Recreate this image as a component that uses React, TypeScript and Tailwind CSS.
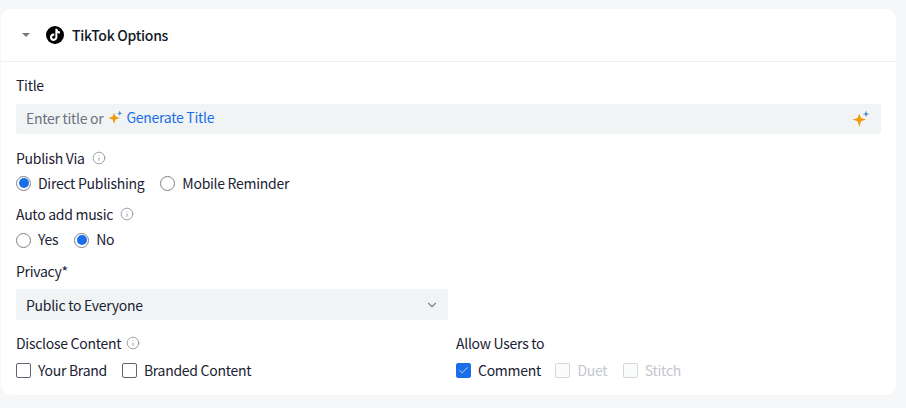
import React from 'react';
import { ChevronDown, Info, Check } from 'lucide-react';

const Sparkle = ({ size = 16 }: { size?: number }) => (
  <svg width={size} height={size} viewBox="0 0 16 16" className="shrink-0">
    <path d="M6.5 3 L8 7 L12.5 8.5 L8 10 L6.5 15 L5 10 L.5 8.5 L5 7 Z" fill="#f09a0a" />
    <path d="M12.5 .5 L13.2 2.8 L15.5 3.5 L13.2 4.2 L12.5 6.5 L11.8 4.2 L9.5 3.5 L11.8 2.8 Z" fill="#4a86c8" />
  </svg>
);

const TikTokLogo = () => (
  <svg width="18" height="18" viewBox="0 0 18 18">
    <circle cx="9" cy="9" r="9" fill="#000" />
    <path
      transform="translate(9 9) scale(1.2) translate(-9.3 -9)"
      d="M9.6 3.8h1.7c.1 1.3.9 2.2 2.2 2.3v1.7c-.8 0-1.5-.2-2.2-.7v3.6c0 1.9-1.4 3.2-3.1 3.2-1.8 0-3.1-1.4-3.1-3.1 0-1.9 1.6-3.3 3.6-3v1.8c-.9-.2-1.8.3-1.8 1.2 0 .7.6 1.3 1.3 1.3.8 0 1.4-.6 1.4-1.4V3.8z"
      fill="#fff"
    />
  </svg>
);

const Radio = ({ label, checked, raised }: { label: string; checked?: boolean; raised?: boolean }) => (
  <label className="flex h-5 items-center gap-[7px]">
    <span className="flex h-[15px] w-[15px] items-center justify-center rounded-full border border-[#7d828a] bg-white">
      {checked && <span className="h-[10px] w-[10px] rounded-full bg-[#1a6fe8]" />}
    </span>
    <span className={raised ? 'mb-[2px]' : ''}>{label}</span>
  </label>
);

const Checkbox = ({ label, checked, disabled, className = '' }: { label: string; checked?: boolean; disabled?: boolean; className?: string }) => (
  <label className={`flex items-center gap-[7px] ${disabled ? 'text-[#c4c7cc]' : ''} ${className}`}>
    <span
      className={`flex h-[15px] w-[15px] items-center justify-center rounded-[2px] border ${
        checked ? 'border-[#1a6fe8] bg-[#1a6fe8]' : disabled ? 'border-[#d5d7da] bg-[#fafbfb]' : 'border-[#5f6570] bg-white'
      }`}
    >
      {checked && <Check size={11} strokeWidth={1.5} className="text-white" />}
    </span>
    <span>{label}</span>
  </label>
);

const InfoIcon = () => <Info size={14} strokeWidth={1.25} className="text-[#7b8088]" />;

export default function App() {
  return (
    <div
      className="h-[408px] w-[906px] overflow-hidden bg-[#f6f7f9] pt-[9px] pl-px text-[14px] leading-[20px] tracking-[-0.28px] text-[#1a2233]"
      style={{ fontFamily: '"Noto Sans CJK SC", "Noto Sans", sans-serif' }}
    >
      <div className="h-[386px] w-[895px] rounded-[10px] bg-white">
        {/* Header */}
        <div className="flex h-[53px] items-center border-b border-[#eff0f2] pl-[21px]">
          <span className="mr-[16px] h-0 w-0 border-x-[4px] border-t-[4px] border-x-transparent border-t-[#75787f]" />
          <TikTokLogo />
          <span className="ml-[8px] font-medium text-[#111827]">TikTok Options</span>
        </div>

        <div className="pt-[13px] pl-[15px]">
          <div>Title</div>
          <div className="mt-[9px] flex h-[30px] w-[865px] items-center justify-between rounded-[2px] bg-[#f1f4f5] pr-[11px] pl-[10px]">
            <div className="flex items-center gap-[5px] pb-[3px]">
              <span className="text-[#6b7280]">Enter title or</span>
              <Sparkle size={15} />
              <span className="-ml-[2px] mb-[2px] text-[#1a6fe8]">Generate Title</span>
            </div>
            <Sparkle size={18} />
          </div>

          <div className="mt-[14px] flex items-center gap-[7px]">
            Publish Via <InfoIcon />
          </div>
          <div className="mt-[5px] flex items-center gap-[16px]">
            <Radio label="Direct Publishing" checked />
            <Radio label="Mobile Reminder" />
          </div>

          <div className="mt-[11px] flex items-center gap-[7px]">
            Auto add music <InfoIcon />
          </div>
          <div className="mt-[6px] flex items-center gap-[16px]">
            <Radio label="Yes" raised />
            <Radio label="No" checked raised />
          </div>

          <div className="mt-[11px]">Privacy*</div>
          <div className="mt-[8px] flex h-[31px] w-[432px] items-center justify-between rounded-[2px] bg-[#f1f4f5] pr-[9px] pl-[10px]">
            <span>Public to Everyone</span>
            <ChevronDown size={14} className="text-[#7b8088]" />
          </div>

          <div className="mt-[13px] flex">
            <div className="w-[440px]">
              <div className="flex items-center gap-[5px]">
                Disclose Content <InfoIcon />
              </div>
              <div className="mt-[7px] flex items-center gap-[16px]">
                <Checkbox label="Your Brand" />
                <Checkbox label="Branded Content" className="-ml-px" />
              </div>
            </div>
            <div>
              <div>Allow Users to</div>
              <div className="mt-[7px] flex items-center gap-[14.5px]">
                <Checkbox label="Comment" checked />
                <Checkbox label="Duet" disabled />
                <Checkbox label="Stitch" disabled className="ml-px" />
              </div>
            </div>
          </div>
        </div>
      </div>
    </div>
  );
}
